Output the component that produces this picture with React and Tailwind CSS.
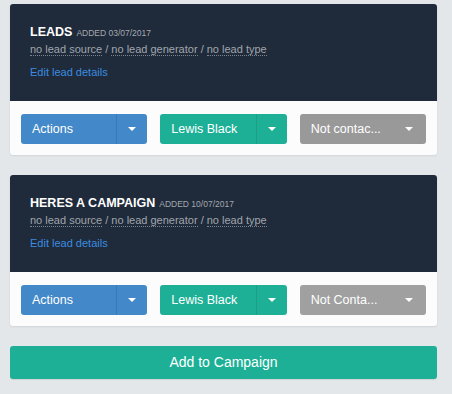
import React from 'react';

const Caret = () => (
  <span className="inline-block w-0 h-0 border-l-[4px] border-r-[4px] border-t-[4px] border-l-transparent border-r-transparent border-t-white" />
);

const SplitButton = ({ label, color, divider }) => (
  <div className={`flex h-[30px] rounded-[3px] text-white ${color}`}>
    <div className="flex-1 flex items-center pl-[11px] text-[12.5px]">{label}</div>
    <div className={`w-[31px] flex items-center justify-center border-l ${divider}`}>
      <Caret />
    </div>
  </div>
);

const LeadCard = ({ title, added, status, statusColor }) => {
  const meta = ['no lead source', 'no lead generator', 'no lead type'];

  return (
    <div className="rounded-[3px] overflow-hidden bg-[#fcfcfc] shadow-[0_1px_2px_rgba(0,0,0,0.08)]">
      <div className="bg-[#1f2a3a] px-[20px] pt-[20px] pb-[21px]">
        <div className="flex items-baseline gap-[4px] leading-[16px]">
          <span className="text-white font-bold text-[12.5px]">{title}</span>
          <span className="text-[#a4a9b0] text-[8.5px]">{added}</span>
        </div>
        <div className="mt-[1px] text-[11px] leading-[15px] text-[#a0a6ad]">
          {meta.map((m, i) => (
            <React.Fragment key={m}>
              <span className="border-b border-dotted border-[#7d848e]">{m}</span>
              {i < meta.length - 1 && <span> / </span>}
            </React.Fragment>
          ))}
        </div>
        <div className="mt-[8px] text-[11px] leading-[15px] text-[#3b8de0]">Edit lead details</div>
      </div>
      <div className="grid grid-cols-3 gap-[13px] px-[11px] pt-[13px] pb-[11px]">
        <SplitButton label="Actions" color="bg-[#4388c8]" divider="border-[#3a79b6]" />
        <SplitButton label="Lewis Black" color="bg-[#1db096]" divider="border-[#19a087]" />
        <div className={`flex h-[30px] items-center justify-between rounded-[3px] pl-[11px] pr-[13px] text-white text-[12.5px] ${statusColor}`}>
          <span>{status}</span>
          <Caret />
        </div>
      </div>
    </div>
  );
};

const App = () => {
  return (
    <div className="min-h-screen w-[452px] bg-[#e3e7ea] px-[10px] pt-[4px] pb-[15px] font-['Liberation_Sans',Arial,sans-serif]">
      <div className="w-[427px] flex flex-col gap-[20px]">
        <LeadCard title="LEADS" added="ADDED 03/07/2017" status="Not contac..." statusColor="bg-[#999999]" />
        <LeadCard title="HERES A CAMPAIGN" added="ADDED 10/07/2017" status="Not Conta..." statusColor="bg-[#a0a0a0]" />
        <button className="h-[33px] w-full rounded-[3px] bg-[#1db096] text-white text-[14px] shadow-[0_1px_1px_rgba(0,0,0,0.08)]">
          Add to Campaign
        </button>
      </div>
    </div>
  );
};

export default App;
